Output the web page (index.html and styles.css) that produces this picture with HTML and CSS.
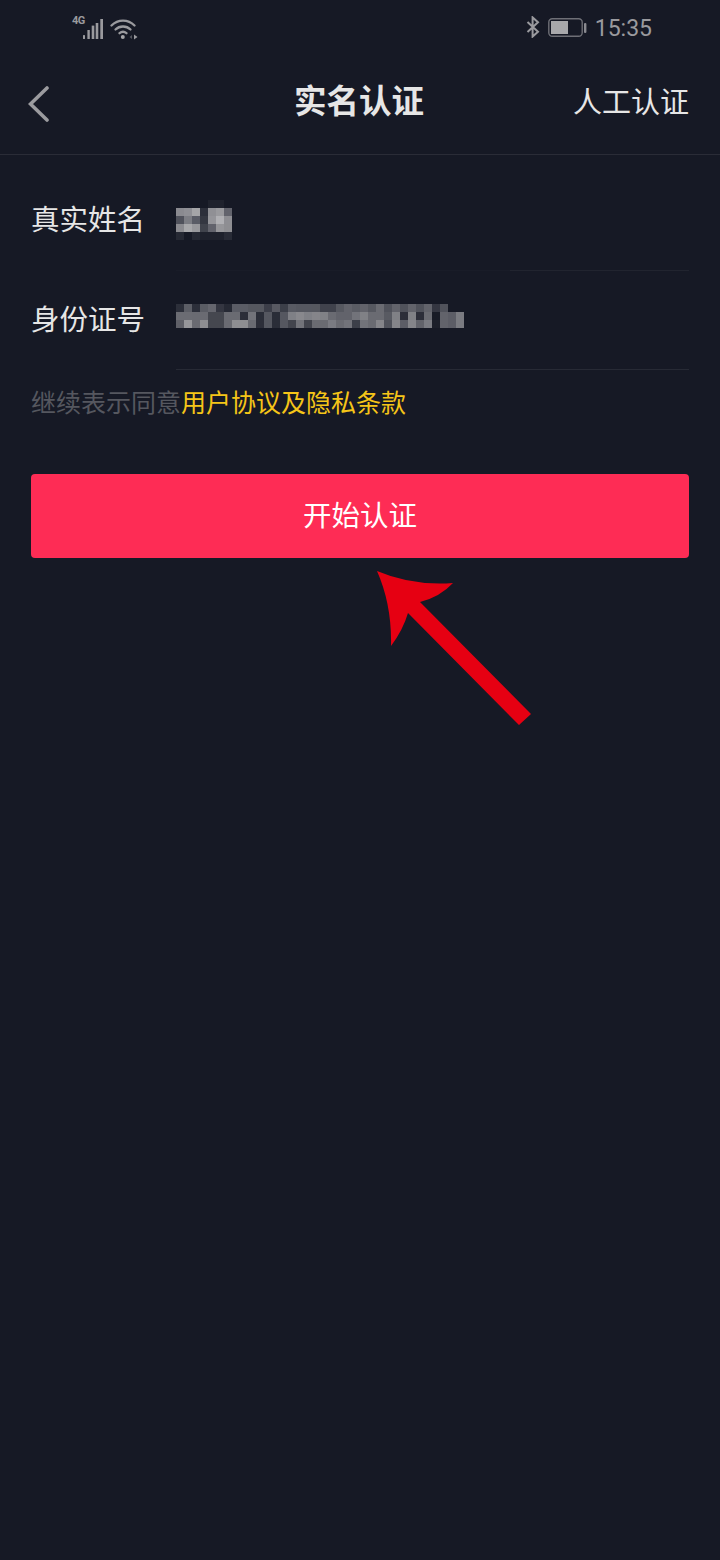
FILE: index.html
```html
<!DOCTYPE html>
<html lang="zh-CN">
<head>
  <meta charset="UTF-8" />
  <title>实名认证</title>
  <link rel="stylesheet" href="styles.css">
</head>
<body>
<div class="screen">

  <!-- Status bar -->
  <div class="status-bar">
    <div class="status-left">
      <span class="net-type">4G</span>
      <svg class="signal" width="22" height="22" viewBox="0 0 22 22">
        <rect x="1" y="17" width="2" height="4" rx="0.6"/>
        <rect x="5.4" y="12" width="2.4" height="9"/>
        <rect x="9.7" y="7.6" width="2.6" height="13.4"/>
        <rect x="13.7" y="5" width="2.6" height="16"/>
        <rect x="18.3" y="1" width="2.7" height="20"/>
      </svg>
      <svg class="wifi" width="28" height="22" viewBox="0 0 28 22">
        <g fill="none" stroke="#9a9a9e" stroke-width="2.3" stroke-linecap="round">
          <path d="M1.5 7.5 C8 1 18 1 24.5 7.5"/>
          <path d="M5.5 11.5 C9.5 7.5 16.5 7.5 20.5 11.5"/>
          <path d="M9.5 15.2 C11.5 13.6 14.5 13.6 16.5 15.2"/>
        </g>
        <circle cx="12.8" cy="19" r="2" fill="#a5a5a8"/>
        <path d="M19.5 19 L22 17 L22 21 Z" fill="#55575f"/>
        <path d="M27.5 19 L24 16.5 L24 21.5 Z" fill="#9a9a9e"/>
      </svg>
    </div>
    <div class="status-right">
      <svg class="bt" width="14" height="22" viewBox="0 0 14 22">
        <path d="M1.5 6 L12 15.8 L6.6 20.6 L6.6 1.4 L12 6.2 L1.5 16" fill="none" stroke="#9a9a9e" stroke-width="2"/>
      </svg>
      <svg class="battery" width="39" height="20" viewBox="0 0 39 20">
        <rect x="0.8" y="0.8" width="33.4" height="17.4" rx="3.5" fill="none" stroke="#6e6f76" stroke-width="1.4"/>
        <path d="M3 3 H20 V16 H3 Z" fill="#a8a8ab"/>
        <rect x="36" y="5" width="2.4" height="10" rx="1" fill="#8a8a90"/>
      </svg>
      <span class="clock">15:35</span>
    </div>
  </div>

  <!-- Header -->
  <div class="nav-bar">
    <svg class="back" width="22" height="36" viewBox="0 0 22 36">
      <path d="M19 2 L2.5 18 L19 34" fill="none" stroke="#9b9b9f" stroke-width="3.6" stroke-linecap="round" stroke-linejoin="miter"/>
    </svg>
    <h1 class="nav-title">实名认证</h1>
    <a class="nav-action">人工认证</a>
  </div>

  <!-- Form -->
  <div class="form">
    <div class="field field-name">
      <label class="field-label">真实姓名</label>
      <div class="field-value">
        <svg width="56" height="40" viewBox="0 0 56 40">
          <rect x="32" y="0" width="16" height="8" fill="#1f222d"/>
          <rect x="0" y="8" width="8" height="8" fill="#8a8a90"/><rect x="8" y="8" width="8" height="8" fill="#8f8f95"/><rect x="16" y="8" width="8" height="8" fill="#a5a5a8"/><rect x="24" y="8" width="8" height="8" fill="#2c2f3a"/><rect x="32" y="8" width="8" height="8" fill="#909095"/><rect x="40" y="8" width="8" height="8" fill="#9a9a9e"/><rect x="48" y="8" width="8" height="8" fill="#62636c"/>
          <rect x="0" y="16" width="8" height="8" fill="#50525c"/><rect x="8" y="16" width="8" height="8" fill="#7c7d84"/><rect x="16" y="16" width="8" height="8" fill="#5a5c66"/><rect x="24" y="16" width="8" height="8" fill="#343741"/><rect x="32" y="16" width="8" height="8" fill="#95959a"/><rect x="40" y="16" width="8" height="8" fill="#b0b0b4"/><rect x="48" y="16" width="8" height="8" fill="#8e8e93"/>
          <rect x="0" y="24" width="8" height="8" fill="#8b8b90"/><rect x="8" y="24" width="8" height="8" fill="#a8a8ab"/><rect x="16" y="24" width="8" height="8" fill="#98989c"/><rect x="24" y="24" width="8" height="8" fill="#40434c"/><rect x="32" y="24" width="8" height="8" fill="#62636c"/><rect x="40" y="24" width="8" height="8" fill="#96969a"/><rect x="48" y="24" width="8" height="8" fill="#8e8e92"/>
          <rect x="0" y="32" width="8" height="8" fill="#262934"/><rect x="16" y="32" width="8" height="8" fill="#252833"/><rect x="24" y="32" width="24" height="8" fill="#1e212c"/><rect x="48" y="32" width="8" height="8" fill="#282b36"/>
        </svg>
      </div>
    </div>
    <div class="field field-id">
      <label class="field-label">身份证号</label>
      <div class="field-value">
        <svg width="288" height="24" viewBox="0 0 288 24">
          <g>
            <rect x="0" y="0" width="8" height="8" fill="#2c2f3a"/><rect x="8" y="0" width="8" height="8" fill="#5c5e66"/><rect x="16" y="0" width="8" height="8" fill="#2c2f3a"/><rect x="24" y="0" width="8" height="8" fill="#5a5c64"/><rect x="32" y="0" width="8" height="8" fill="#65666e"/><rect x="40" y="0" width="8" height="8" fill="#343641"/><rect x="48" y="0" width="8" height="8" fill="#262934"/><rect x="56" y="0" width="8" height="8" fill="#5a5c65"/><rect x="64" y="0" width="8" height="8" fill="#5a5c65"/><rect x="72" y="0" width="8" height="8" fill="#55575f"/><rect x="80" y="0" width="8" height="8" fill="#55575f"/><rect x="88" y="0" width="8" height="8" fill="#3c3e49"/><rect x="96" y="0" width="8" height="8" fill="#585962"/><rect x="104" y="0" width="8" height="8" fill="#3c3f49"/><rect x="112" y="0" width="8" height="8" fill="#585a63"/><rect x="120" y="0" width="8" height="8" fill="#555760"/><rect x="128" y="0" width="8" height="8" fill="#555760"/><rect x="136" y="0" width="8" height="8" fill="#55575f"/>
            <rect x="144" y="0" width="8" height="8" fill="#40424c"/><rect x="152" y="0" width="8" height="8" fill="#40424c"/><rect x="160" y="0" width="8" height="8" fill="#565860"/><rect x="168" y="0" width="8" height="8" fill="#62636b"/><rect x="176" y="0" width="8" height="8" fill="#5a5c64"/><rect x="184" y="0" width="8" height="8" fill="#62636b"/><rect x="192" y="0" width="8" height="8" fill="#565860"/><rect x="200" y="0" width="8" height="8" fill="#6a6b72"/><rect x="208" y="0" width="8" height="8" fill="#50525b"/><rect x="216" y="0" width="8" height="8" fill="#62636b"/><rect x="224" y="0" width="8" height="8" fill="#50525b"/><rect x="232" y="0" width="8" height="8" fill="#62636b"/><rect x="240" y="0" width="8" height="8" fill="#50525b"/><rect x="248" y="0" width="8" height="8" fill="#62636b"/><rect x="256" y="0" width="8" height="8" fill="#343641"/><rect x="264" y="0" width="8" height="8" fill="#50525b"/>
          </g>
          <g>
            <rect x="0" y="8" width="8" height="8" fill="#6b6c73"/><rect x="8" y="8" width="8" height="8" fill="#6b6c73"/><rect x="16" y="8" width="8" height="8" fill="#6a6b72"/><rect x="24" y="8" width="8" height="8" fill="#6a6b72"/><rect x="32" y="8" width="8" height="8" fill="#45474f"/><rect x="40" y="8" width="8" height="8" fill="#45474f"/><rect x="48" y="8" width="8" height="8" fill="#6a6b72"/><rect x="56" y="8" width="8" height="8" fill="#6a6b72"/><rect x="64" y="8" width="8" height="8" fill="#2c2e39"/><rect x="72" y="8" width="8" height="8" fill="#72737a"/><rect x="80" y="8" width="8" height="8" fill="#2a2d38"/><rect x="88" y="8" width="8" height="8" fill="#555760"/><rect x="96" y="8" width="8" height="8" fill="#2a2d38"/><rect x="104" y="8" width="8" height="8" fill="#555760"/><rect x="112" y="8" width="8" height="8" fill="#7f8086"/><rect x="120" y="8" width="8" height="8" fill="#88888d"/><rect x="128" y="8" width="8" height="8" fill="#7f8086"/><rect x="136" y="8" width="8" height="8" fill="#85858a"/>
            <rect x="144" y="8" width="8" height="8" fill="#808186"/><rect x="152" y="8" width="8" height="8" fill="#6a6b72"/><rect x="160" y="8" width="8" height="8" fill="#62636b"/><rect x="168" y="8" width="8" height="8" fill="#62636b"/><rect x="176" y="8" width="8" height="8" fill="#72737a"/><rect x="184" y="8" width="8" height="8" fill="#808186"/><rect x="192" y="8" width="8" height="8" fill="#6a6b72"/><rect x="200" y="8" width="8" height="8" fill="#6a6b72"/><rect x="208" y="8" width="8" height="8" fill="#585a62"/><rect x="216" y="8" width="8" height="8" fill="#808186"/><rect x="224" y="8" width="8" height="8" fill="#2c2e39"/><rect x="232" y="8" width="8" height="8" fill="#808186"/><rect x="240" y="8" width="8" height="8" fill="#2c2e39"/><rect x="248" y="8" width="8" height="8" fill="#6a6b72"/><rect x="256" y="8" width="8" height="8" fill="#181b26"/><rect x="264" y="8" width="8" height="8" fill="#62636b"/><rect x="272" y="8" width="8" height="8" fill="#5c5d66"/><rect x="280" y="8" width="8" height="8" fill="#7a7b81"/>
          </g>
          <g>
            <rect x="0" y="16" width="8" height="8" fill="#5f6068"/><rect x="8" y="16" width="8" height="8" fill="#96969a"/><rect x="16" y="16" width="8" height="8" fill="#6a6b72"/><rect x="24" y="16" width="8" height="8" fill="#8e8e92"/><rect x="32" y="16" width="8" height="8" fill="#45474f"/><rect x="40" y="16" width="8" height="8" fill="#45474f"/><rect x="48" y="16" width="8" height="8" fill="#6a6b72"/><rect x="56" y="16" width="8" height="8" fill="#8e8e92"/><rect x="64" y="16" width="8" height="8" fill="#8e8e92"/><rect x="72" y="16" width="8" height="8" fill="#6a6b72"/><rect x="80" y="16" width="8" height="8" fill="#2c2e39"/><rect x="88" y="16" width="8" height="8" fill="#555760"/><rect x="96" y="16" width="8" height="8" fill="#2a2d38"/><rect x="104" y="16" width="8" height="8" fill="#555760"/><rect x="112" y="16" width="8" height="8" fill="#42444d"/><rect x="120" y="16" width="8" height="8" fill="#72737a"/><rect x="128" y="16" width="8" height="8" fill="#42444d"/><rect x="136" y="16" width="8" height="8" fill="#6a6b72"/>
            <rect x="144" y="16" width="8" height="8" fill="#6a6b72"/><rect x="152" y="16" width="8" height="8" fill="#7a7b82"/><rect x="160" y="16" width="8" height="8" fill="#6a6b72"/><rect x="168" y="16" width="8" height="8" fill="#72737a"/><rect x="176" y="16" width="8" height="8" fill="#3c3f49"/><rect x="184" y="16" width="8" height="8" fill="#72737a"/><rect x="192" y="16" width="8" height="8" fill="#6a6b72"/><rect x="200" y="16" width="8" height="8" fill="#85858a"/><rect x="208" y="16" width="8" height="8" fill="#50525b"/><rect x="216" y="16" width="8" height="8" fill="#85858a"/><rect x="224" y="16" width="8" height="8" fill="#5c5d66"/><rect x="232" y="16" width="8" height="8" fill="#85858a"/><rect x="240" y="16" width="8" height="8" fill="#62636b"/><rect x="248" y="16" width="8" height="8" fill="#7a7b82"/><rect x="256" y="16" width="8" height="8" fill="#1c1f2a"/><rect x="264" y="16" width="8" height="8" fill="#62636b"/><rect x="272" y="16" width="8" height="8" fill="#5c5d66"/><rect x="280" y="16" width="8" height="8" fill="#7a7b81"/>
          </g>
        </svg>
      </div>
    </div>

    <p class="agree">继续表示同意<span class="agree-link">用户协议及隐私条款</span></p>

    <button class="start-btn"><span class="start-btn-text">开始认证</span></button>
  </div>

  <!-- Red annotation arrow drawn over the screenshot -->
  <svg class="arrow" width="720" height="760" viewBox="0 0 720 760">
    <path d="M377 571 Q412 586 453 583 Q440 597 420 602 L531 714 L519 725 L408 613 Q403 630 391 646 Q392 605 377 571 Z" fill="#e60012"/>
  </svg>
</div>
</body>
</html>
```

FILE: styles.css
```css
html, body {
  margin: 0;
  padding: 0;
  height: 100%;
  overflow: hidden;
  background: #161925;
  font-family: "Noto Sans CJK SC", "Noto Sans", sans-serif;
}

.screen {
  position: relative;
  width: 720px;
  height: 1560px;
}

.status-bar {
  height: 56px;
  display: flex;
  justify-content: space-between;
  align-items: flex-start;
  padding: 0 68px 0 72px;
  color: #9a9a9e;
}

.status-left, .status-right {
  display: flex;
  align-items: center;
  height: 56px;
}

.status-left svg, .status-right svg {
  display: block;
}

.net-type {
  font-family: "Roboto", sans-serif;
  font-size: 11px;
  font-weight: 700;
  width: 10px;
  margin-bottom: 16px;
  letter-spacing: -0.5px;
  color: #9a9a9e;
}

.signal {
  fill: #9a9a9e;
  margin: 0 6px 0 0;
}

.status-left .signal {
  margin-bottom: -2px;
}

.status-left .wifi {
  margin-bottom: -2px;
}

.status-right .bt {
  margin-right: 10px;
  margin-top: -2px;
}

.status-right .battery {
  margin-right: 8px;
  margin-top: -1px;
  margin-left: -2px;
}

.clock {
  font-family: Roboto, sans-serif;
  font-size: 23px;
  color: #9a9a9e;
}

.nav-bar {
  height: 98px;
  display: grid;
  grid-template-columns: 1fr auto 1fr;
  align-items: center;
  padding: 0 31px 0 29px;
  border-bottom: 1px solid #2a2c37;
}

.back {
  display: block;
  margin-top: -3px;
  margin-left: -1px;
}

.nav-title {
  margin: 0 0 13px;
  font-size: 32.5px;
  font-weight: 700;
  color: #e6e6e6;
}

.nav-action {
  justify-self: end;
  margin-bottom: 10px;
  font-size: 29px;
  color: #e6e6e6;
}

.form {
  padding: 15px 31px 0;
}

.field {
  display: flex;
}

.field-name {
  height: 101px;
}

.field-id {
  height: 99px;
}

.field-label {
  width: 145px;
  font-size: 28.5px;
  line-height: 96px;
  color: #e6e6e6;
}

.field-id .field-label {
  line-height: 94px;
}

.field-value {
  flex: 1;
  border-bottom: 1px solid #21242f;
}

.field-name .field-value {
  padding-top: 30px;
  border-image: linear-gradient(to right, #191c28 65%, #21242f 65%) 1;
}

.field-id .field-value {
  padding-top: 33px;
  border-color: #272a35;
}

.field-value svg {
  display: block;
}

.agree {
  margin: 13px 0 0;
  font-size: 25px;
  line-height: 36px;
  color: #55575f;
}

.agree-link {
  color: #f5c518;
}

.start-btn {
  display: block;
  width: 100%;
  height: 84px;
  margin-top: 55px;
  padding: 0 0 6px;
  border: none;
  border-radius: 4px;
  background: #fe2c55;
  color: #fff;
  font-family: inherit;
  font-size: 28.5px;
}

.arrow {
  position: absolute;
  left: 0;
  top: 0;
}
```
